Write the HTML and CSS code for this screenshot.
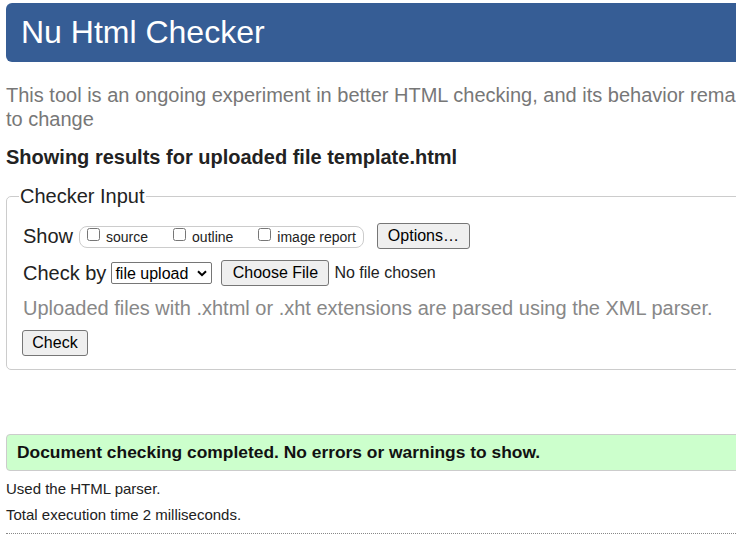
FILE: index.html
```html
<!DOCTYPE html>
<html lang="en">
<head>
<meta charset="utf-8">
<title>Nu Html Checker</title>
<link rel="stylesheet" href="styles.css">
</head>
<body>
<div class="page">
  <h1 class="title">Nu Html Checker</h1>
  <p class="intro">This tool is an ongoing experiment in better HTML checking, and its behavior remains subject to change</p>
  <h2 class="results">Showing results for uploaded file template.html</h2>
  <fieldset class="input">
    <legend class="legend">Checker Input</legend>
    <div class="row">
      <span class="label">Show</span>
      <span class="opts">
        <label class="opt"><input type="checkbox">source</label>
        <label class="opt"><input type="checkbox">outline</label>
        <label class="opt"><input type="checkbox">image report</label>
      </span>
      <button class="btn options" type="button">Options…</button>
    </div>
    <div class="row row-check">
      <span class="label">Check by</span>
      <span class="selwrap">
        <select class="sel"><option>file upload</option></select>
        <svg class="chev" width="10" height="7" viewBox="0 0 10 7" aria-hidden="true"><path d="M1 1.2 L5 5.2 L9 1.2" fill="none" stroke="#000" stroke-width="2"/></svg>
      </span>
      <span class="file"><button class="btn choose" type="button">Choose File</button><span class="nofile">No file chosen</span></span>
    </div>
    <p class="hint">Uploaded files with .xhtml or .xht extensions are parsed using the XML parser.</p>
    <button class="btn check" type="submit">Check</button>
  </fieldset>
  <p class="success">Document checking completed. No errors or warnings to show.</p>
  <p class="stat">Used the HTML parser.</p>
  <p class="stat">Total execution time 2 milliseconds.</p>
  <hr class="sep">
</div>
</body>
</html>
```
FILE: styles.css
```css
html, body {
  margin: 0;
  padding: 0;
  overflow: hidden;
  background: #fff;
}
body {
  font-family: "Liberation Sans", Arial, sans-serif;
  color: #222;
}
.page {
  width: 840px;
  padding: 3px 6px 0 6px;
}
.title {
  margin: 0;
  height: 59px;
  line-height: 58px;
  padding-left: 15px;
  font-size: 32px;
  font-weight: normal;
  color: #fff;
  background: #365d95;
  border-radius: 6px;
}
.intro {
  margin: 21px 0 0 0;
  font-size: 20px;
  line-height: 24px;
  color: #777;
}
.results {
  margin: 14px 0 0 0;
  font-size: 20px;
  line-height: 24px;
  font-weight: bold;
  color: #222;
}
.input {
  margin: 16px 0 0 0;
  padding: 15px 16px 13px 16px;
  border: 1px solid #ccc;
  border-radius: 5px;
  min-width: 0;
}
.legend {
  margin-left: -4px;
  padding: 0 1px;
  font-size: 20px;
  line-height: 23px;
  color: #222;
}
.row {
  display: flex;
  align-items: center;
  height: 26px;
}
.row-check {
  margin-top: 11px;
}
.label {
  font-size: 20px;
  line-height: 24px;
  margin-right: 6px;
}
.row-check .label {
  margin-right: 5px;
}
.opts {
  display: inline-flex;
  align-items: center;
  height: 20px;
  border: 1px solid #ccc;
  border-radius: 8px;
  padding: 0 7px 0 3px;
  margin-top: 1px;
}
.opt {
  display: inline-flex;
  align-items: baseline;
  font-size: 14px;
  margin-right: 21px;
}
.opt:last-child {
  margin-right: 0;
}
.opt input {
  margin: 0 6px 0 4px;
  width: 13px;
  height: 13px;
  position: relative;
  top: -1px;
}
.btn {
  font-family: "Liberation Sans", Arial, sans-serif;
  font-size: 16px;
  color: #000;
  background: #efefef;
  border: 1px solid #767676;
  border-radius: 3px;
  padding: 0 9px;
  height: 26px;
}
.options {
  margin-left: 13px;
  width: 93px;
}
.selwrap {
  position: relative;
  display: inline-flex;
  align-items: center;
}
.sel {
  -webkit-appearance: none;
  appearance: none;
  font-family: "Liberation Sans", Arial, sans-serif;
  font-size: 16px;
  height: 22px;
  width: 101px;
  padding: 0 0 0 3px;
  border: 1px solid #767676;
  border-radius: 2px;
  background: #fff;
  color: #000;
}
.chev {
  position: absolute;
  right: 5px;
  top: 8px;
  pointer-events: none;
}
.file {
  display: inline-flex;
  align-items: center;
  margin-left: 9px;
  font-size: 16px;
}
.choose {
  width: 108px;
  padding: 0;
}
.nofile {
  margin-left: 5px;
  color: #222;
}
.hint {
  margin: 10px 0 0 0;
  font-size: 20px;
  line-height: 24px;
  color: #888;
}
.check {
  margin-top: 10px;
  height: 26px;
  width: 66px;
  padding: 0;
  margin-left: -1px;
  display: block;
}
.success {
  margin: 64px 0 0 0;
  padding: 7px 10px 7px 10px;
  font-size: 17.4px;
  line-height: 21px;
  font-weight: bold;
  color: #111;
  background: #ccffcc;
  border: 1px solid #ccc;
  border-radius: 4px;
}
.stat {
  margin: 9px 0 0 0;
  font-size: 15px;
  line-height: 17px;
  color: #222;
}
.sep {
  margin: 10px 0 0 0;
  border: 0;
  border-top: 1px dotted #888;
  height: 0;
}
```
